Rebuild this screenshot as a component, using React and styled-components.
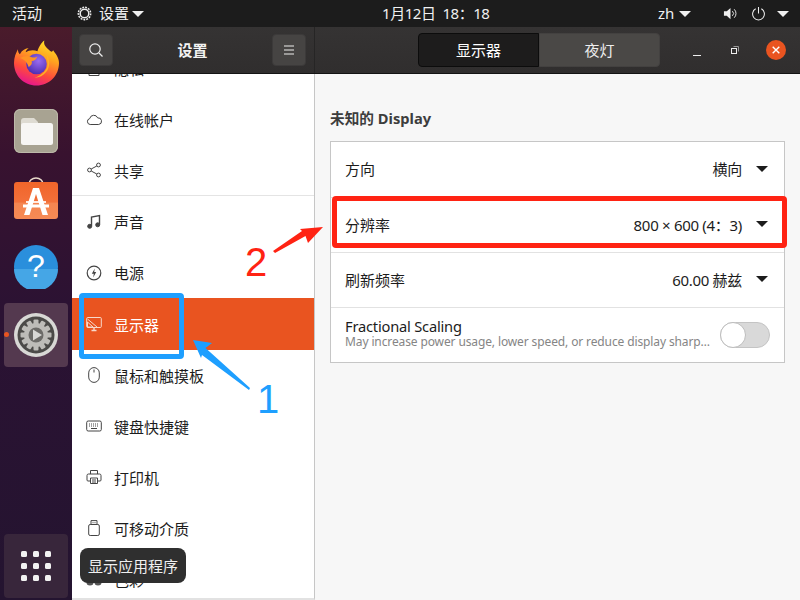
import React from "react";
import styled, { createGlobalStyle } from "styled-components";

const Global = createGlobalStyle`
  html, body { margin: 0; padding: 0; width: 800px; height: 600px; overflow: hidden; background: #1d1d1d; }
  * { box-sizing: border-box; }
  body { font-family: "Noto Sans", "Noto Sans CJK SC", sans-serif; font-size: 15px; }
`;

const Screen = styled.div`position: relative; width: 800px; height: 600px; display: flex; flex-direction: column; overflow: hidden;`;
const TopBar = styled.header`height: 27px; background: #1c1c1c; color: #f0f0f0; display: flex; align-items: center; flex: none; line-height: 27px;`;
const Activities = styled.span`margin-left: 12px; width: 65px;`;
const AppMenu = styled.span`display: flex; align-items: center; gap: 7px; width: 55px;`;
const Clock = styled.span`margin-left: 238px; width: 276px; white-space: pre; letter-spacing: -.45px;`;
const Tray = styled.span`display: flex; align-items: center;`;
const Caret = styled.i`display: block; width: 0; height: 0; border-left: 6px solid transparent; border-right: 6px solid transparent; border-top: 6px solid ${p => p.$color || "#f0f0f0"}; margin-left: ${p => p.$ml || 0}px;`;

const Body = styled.div`flex: 1; display: flex; min-height: 0;`;
const Dock = styled.nav`width: 72px; flex: none; display: flex; flex-direction: column; align-items: center; gap: 4px; padding: 4px 4px 2px; background: linear-gradient(180deg, #4a1b2b 0%, #38122f 22%, #2b1233 50%, #241430 100%);`;
const DockItem = styled.div`position: relative; width: 64px; height: 64px; flex: none; border-radius: 4px; display: flex; align-items: center; justify-content: center; background: ${p => p.$active ? "#54394f" : "transparent"}; margin-top: ${p => p.$bottom ? "auto" : 0};`;
const AppsTile = styled(DockItem)`background: #38263b;`;
const RunDot = styled.i`position: absolute; left: 0; top: 29px; width: 5px; height: 5px; border-radius: 50%; background: #e95420;`;
const AppsGrid = styled.div`display: grid; grid-template-columns: repeat(3, 6px); grid-auto-rows: 6px; gap: 6px;`;
const AppsDot = styled.i`display: block; background: #f2f2f2; border-radius: 1.5px;`;

const Win = styled.div`flex: 1; display: flex; flex-direction: column; min-width: 0;`;
const HeaderBar = styled.div`height: 47px; flex: none; display: flex; background: linear-gradient(#353333, #302e2e); border-bottom: 1px solid #141414; color: #f3f3f3;`;
const HeaderLeft = styled.div`width: 243px; flex: none; display: flex; align-items: center; justify-content: space-between; padding: 0 8px 1px 7px; border-right: 1px solid #262525;`;
const HeaderTitle = styled.span`font-weight: 700;`;
const HeaderBtn = styled.button`width: 34px; height: 32px; border: 1px solid #3c3a3a; border-radius: 4px; background: #464443; display: flex; align-items: center; justify-content: center; padding: 0;`;
const HeaderRight = styled.div`flex: 1; display: flex; align-items: center; padding-left: 103px;`;
const Switcher = styled.div`display: flex; height: 34px; width: 242px; margin-bottom: 1px;`;
const Tab = styled.div`flex: 1; display: flex; align-items: center; justify-content: center; background: ${p => p.$on ? "#1d1c1c" : "#4a4846"}; border: 1px solid ${p => p.$on ? "#0c0c0c" : "#434140"}; border-radius: ${p => p.$on ? "4px 0 0 4px" : "0 4px 4px 0"}; color: ${p => p.$on ? "#fff" : "#eee"};`;
const WinControls = styled.div`display: flex; align-items: center; margin-left: 33px; gap: 29px; margin-bottom: 1px;`;
const CloseBtn = styled.span`width: 20px; height: 20px; border-radius: 50%; background: #e95420; display: flex; align-items: center; justify-content: center; margin-left: -3px;`;

const Content = styled.div`flex: 1; display: flex; min-height: 0;`;
const Sidebar = styled.aside`width: 243px; flex: none; background: #fff; border-right: 1px solid #c6c6c6; border-bottom: 2px solid #e2e2e2; overflow: hidden;`;
const SideList = styled.ul`list-style: none; margin: -31px 0 0; padding: 0;`;
const SideRow = styled.li`height: 51.1px; display: flex; align-items: center; padding-left: 14px; gap: 12px; color: ${p => p.$on ? "#fff" : "#1c1c1c"}; background: ${p => p.$on ? "#e95420" : "transparent"}; border-bottom: ${p => p.$sep ? "1px solid #e4e4e4" : "0"};`;
const Main = styled.main`flex: 1; background: #f7f7f7; padding: 33px 15px 0 15px;`;
const SectionTitle = styled.h2`margin: 0 0 12px; font-size: 14.67px; line-height: 22px; font-weight: 700; color: #3d3d3d;`;
const Panel = styled.section`background: #fff; border: 1px solid #c6c6c6;`;
const Row = styled.div`height: 55px; display: flex; align-items: center; justify-content: space-between; padding: 0 16px 2px 14px; color: #1c1c1c; & + & { border-top: 1px solid #e2e2e2; }`;
const Value = styled.span`display: flex; align-items: center; gap: 14px; letter-spacing: -.3px;`;
const Stack = styled.div`display: flex; flex-direction: column; min-width: 0; width: 367px; margin-top: -2px;`;
const Label = styled.span`line-height: 18px; font-size: 14.67px; letter-spacing: -.2px;`;
const Sub = styled.span`font-size: 12px; line-height: 14px; letter-spacing: -.12px; color: #858585; white-space: nowrap; overflow: hidden; text-overflow: ellipsis;`;
const Toggle = styled.span`width: 50px; height: 26px; border-radius: 13px; background: #d9d9d9; border: 1px solid #c4c4c4; display: block; margin: 2px -2px 0 0;`;
const Knob = styled.i`display: block; width: 26px; height: 26px; margin: -1px; border-radius: 50%; background: #fff; border: 1px solid #bdbdbd;`;

const Tooltip = styled.div`position: absolute; left: 80px; top: 548px; width: 106px; height: 35px; border-radius: 8px; background: #2f2f2f; color: #f0f0f0; display: flex; align-items: center; justify-content: center;`;
const BlueBox = styled.div`position: absolute; left: 79px; top: 293px; width: 105px; height: 66px; border: 5px solid #1e9fff; border-radius: 4px;`;
const RedBox = styled.div`position: absolute; left: 332px; top: 196px; width: 455px; height: 52px; border: 5px solid #ff2313; border-radius: 4px;`;
const Mark = styled.span`position: absolute; left: ${p => p.$x}px; top: ${p => p.$y}px; color: ${p => p.$c}; font: 400 40px/46px "Liberation Sans", sans-serif;`;
const ArrowLayer = styled.svg`position: absolute; left: 0; top: 0; width: 800px; height: 600px; pointer-events: none;`;

const S = ({ children, size = 16, color = "#444", sw = 1 }) => (
  <svg width={size} height={size} viewBox="0 0 16 16" fill="none" stroke={color} strokeWidth={sw} style={{ flex: "none", display: "block" }}>{children}</svg>
);

const icons = {
  bell: <path d="M3 2.5h10v12H3z" />,
  cloud: <path d="M4.2 12.5a3 3 0 0 1-.5-5.9 4.2 4.2 0 0 1 8-.7 3.3 3.3 0 0 1 1 6.6z" />,
  share: <><circle cx="3.5" cy="8" r="1.9" /><circle cx="12.5" cy="3" r="1.9" /><circle cx="12.5" cy="13" r="1.9" /><path d="M5.2 7 10.8 4M5.2 9l5.6 3" /></>,
  music: <><path d="M5.5 12V3l8-1.5V10.5" strokeWidth="1.4" /><circle cx="3.7" cy="12.3" r="2" fill="#444" /><circle cx="11.7" cy="10.8" r="2" fill="#444" /></>,
  power: <><circle cx="8" cy="8" r="6.8" strokeWidth="1.2" /><path d="M8.8 3.6 5.8 8.8h2l-.6 3.6 3-5.4h-2z" fill="#444" stroke="none" /></>,
  mouse: <><rect x="2.7" y="0.6" width="10.6" height="14.8" rx="5.3" /><path d="M8 2.5v3" /></>,
  keyboard: <><rect x=".7" y="3" width="14.6" height="10" rx="1.5" /><path d="M3 6h10M3 8h10" strokeDasharray="1 1" /><path d="M5 10.5h6" /></>,
  printer: <><path d="M4.5 5V1.5h7V5M4 12H2a1 1 0 0 1-1-1V6.5a1.5 1.5 0 0 1 1.5-1.5h11A1.5 1.5 0 0 1 15 6.5V11a1 1 0 0 1-1 1h-2" /><path d="M4.5 9h7v5.5h-7zM6 11h4M6 13h4" /></>,
  usb: <><rect x="2.7" y="4.5" width="10.6" height="11" rx="1.5" /><path d="M5 4.5V.6h6v3.9M7 2.2v1M9 2.2v1" /></>,
  color: <><circle cx="4" cy="11" r="3.6" fill="#555" stroke="none" /><circle cx="12" cy="11" r="3.6" fill="#555" stroke="none" /><circle cx="8" cy="5" r="3" /></>,
};

const items = [
  ["bell", "隐私"], ["cloud", "在线帐户"], ["share", "共享", true], ["music", "声音"], ["power", "电源"],
  ["display", "显示器"], ["mouse", "鼠标和触摸板"], ["keyboard", "键盘快捷键"], ["printer", "打印机"], ["usb", "可移动介质"], ["color", "色彩"],
];

const MonitorIcon = () => (
  <S color="#f7d9cb"><rect x=".7" y="1.5" width="14.6" height="10" rx="1" /><path d="M1.5 3 11 11M1.5 6 7 11M1.5 6v5H7" /><path d="M5.5 14.5h5M8 11.5v3" strokeWidth="1.4" /></S>
);

const Firefox = () => (
  <svg width="45" height="46" viewBox="0 0 46 46">
    <defs>
      <linearGradient id="ffa" x1="0.75" y1="0" x2="0.35" y2="1"><stop offset="0" stopColor="#ffe226" /><stop offset=".35" stopColor="#ffa41f" /><stop offset=".7" stopColor="#ff4a3c" /><stop offset="1" stopColor="#e5158f" /></linearGradient>
      <radialGradient id="ffb" cx=".6" cy=".35" r=".7"><stop offset="0" stopColor="#9a6cf0" /><stop offset="1" stopColor="#4a2bb0" /></radialGradient>
    </defs>
    <path d="M31 0c-1 4 1 6 4 9 3 3 4 3 5 1 2 3 6 7 6 13 0 13-10 23-23 23C10 46 0 36 0 23 0 17 2 13 4 9c0 3 1 4 2 5 2-4 6-6 9-6-2 1-3 3-3 4 3-2 8-3 12-1 1-4 4-9 7-11z" fill="url(#ffa)" />
    <circle cx="23" cy="24" r="10.5" fill="url(#ffb)" />
    <path d="M6 18c4-2 8-3 12-1 3 1 5 0 6-1-1 3-3 5-6 5 1 3-1 5-3 6-1-3-3-7-9-9z" fill="#ff9324" />
    <path d="M33 14c4 5 4 13 0 18-3 4-7 6-12 6 6-2 11-6 13-11 1-4 0-9-1-13z" fill="#ffb224" />
  </svg>
);
const Files = () => (
  <svg width="44" height="44" viewBox="0 0 44 44">
    <rect width="44" height="44" rx="6" fill="#a8a392" /><rect x=".5" y=".5" width="43" height="43" rx="6" fill="none" stroke="#bdb9aa" />
    <path d="M7 12a3 3 0 0 1 3-3h10l4 4v6H7z" fill="#dedbd2" />
    <rect x="7" y="14" width="32" height="22" rx="2.5" fill="#f7f6f4" />
  </svg>
);
const Store = () => (
  <svg width="44" height="44" viewBox="0 0 44 44" style={{ marginTop: -3 }}>
    <defs>
      <linearGradient id="sta" x1="0" y1="0" x2="0" y2="1"><stop offset="0" stopColor="#f0652a" /><stop offset=".55" stopColor="#f3703a" /><stop offset=".56" stopColor="#f58550" /><stop offset="1" stopColor="#f68a55" /></linearGradient>
    </defs>
    <path d="M15 8a7 6 0 0 1 14 0" fill="none" stroke="#eadbcb" strokeWidth="1.6" />
    <rect y="6" width="44" height="37" rx="3" fill="url(#sta)" />
    <path d="M19 12h6l9 27h-5.5L22 18l-6.5 21H10z" fill="#fff" />
    <path d="M9 28.5h26v3H9z" fill="#fff" /><path d="M12 25h20v2H12z" fill="#fff" opacity=".85" />
  </svg>
);
const Help = () => (
  <svg width="44" height="44" viewBox="0 0 44 44">
    <circle cx="22" cy="22" r="22" fill="#2a8fdc" />
    <path d="M0 24h44a22 22 0 0 1-44 0z" fill="#45a6e6" />
    <text x="22" y="32" textAnchor="middle" fontFamily="Liberation Sans, sans-serif" fontSize="32" fill="#fff">?</text>
  </svg>
);
const teeth = Array.from({ length: 12 }, (_, i) => i * 30);
const Gear = () => (
  <svg width="44" height="44" viewBox="0 0 44 44">
    <circle cx="22" cy="22" r="22" fill="#d8d8d5" />
    <circle cx="22" cy="22" r="18.5" fill="#4b4a48" />
    {teeth.map(a => <rect key={a} x="19.5" y="6.5" width="5" height="5" rx="1" fill="#bdbcb8" transform={`rotate(${a} 22 22)`} />)}
    <circle cx="22" cy="22" r="12" fill="#bdbcb8" />
    <circle cx="22" cy="22" r="7.5" fill="#6c6b68" />
    <path d="M19 16.5v11l9-5.5z" fill="#d8d8d5" />
  </svg>
);

export default function App() {
  return (
    <Screen>
      <Global />
      <TopBar>
        <Activities>活动</Activities>
        <AppMenu>
          <svg width="15" height="15" viewBox="0 0 16 16" fill="none" stroke="#eee"><circle cx="8" cy="8" r="4.6" strokeWidth="1.6" /><circle cx="8" cy="8" r="6.6" strokeWidth="1.6" strokeDasharray="2 1.1" /></svg>
          <span>设置</span>
        </AppMenu>
        <Caret />
        <Clock>1月12日  18：18</Clock>
        <Tray>
          zh<Caret $ml={5} />
          <svg width="15" height="15" viewBox="0 0 16 16" style={{ marginLeft: 32 }} fill="none" stroke="#eee"><path d="M1 5.5h3L8 2v12l-4-3.5H1z" fill="#eee" stroke="none" /><path d="M10 5.5a3.4 3.4 0 0 1 0 5M12 3.5a6.4 6.4 0 0 1 0 9" /></svg>
          <svg width="15" height="15" viewBox="0 0 16 16" style={{ marginLeft: 13 }} fill="none" stroke="#eee" strokeWidth="1.1"><path d="M5 3a6.3 6.3 0 1 0 6 0M8 1v7" /></svg>
          <Caret $ml={11} />
        </Tray>
      </TopBar>
      <Body>
        <Dock>
          <DockItem><Firefox /></DockItem>
          <DockItem><Files /></DockItem>
          <DockItem><Store /></DockItem>
          <DockItem><Help /></DockItem>
          <DockItem $active><RunDot /><Gear /></DockItem>
          <AppsTile $bottom>
            <AppsGrid>{Array.from({ length: 9 }, (_, i) => <AppsDot key={i} />)}</AppsGrid>
          </AppsTile>
        </Dock>
        <Win>
          <HeaderBar>
            <HeaderLeft>
              <HeaderBtn>
                <svg width="16" height="16" viewBox="0 0 16 16" fill="none" stroke="#eee" strokeWidth="1.2"><circle cx="7" cy="7" r="5.2" /><path d="m11 11 3.5 3.5" /></svg>
              </HeaderBtn>
              <HeaderTitle>设置</HeaderTitle>
              <HeaderBtn>
                <svg width="12" height="12" viewBox="0 0 12 12" stroke="#eee"><path d="M1 2h10M1 6h10M1 10h10" /></svg>
              </HeaderBtn>
            </HeaderLeft>
            <HeaderRight>
              <Switcher>
                <Tab $on>显示器</Tab>
                <Tab>夜灯</Tab>
              </Switcher>
              <WinControls>
                <svg width="8" height="8" viewBox="0 0 8 8" stroke="#eee" style={{ marginTop: 5 }}><path d="M0 7.5h8" /></svg>
                <svg width="10" height="10" viewBox="0 0 10 10" fill="none" stroke="#eee"><rect x="1.5" y="3.5" width="5" height="5" /><path d="M3.5 1.5h5v5" stroke="#999" /></svg>
                <CloseBtn>
                  <svg width="8" height="8" viewBox="0 0 8 8" stroke="#fff" strokeWidth="1.4"><path d="m.7.7 6.6 6.6M7.3.7.7 7.3" /></svg>
                </CloseBtn>
              </WinControls>
            </HeaderRight>
          </HeaderBar>
          <Content>
            <Sidebar>
              <SideList>
                {items.map(([k, t, sep]) => (
                  <SideRow key={t} $on={k === "display"} $sep={sep}>
                    {k === "display" ? <MonitorIcon /> : <S>{icons[k]}</S>}
                    <span>{t}</span>
                  </SideRow>
                ))}
              </SideList>
            </Sidebar>
            <Main>
              <SectionTitle>未知的 Display</SectionTitle>
              <Panel>
                <Row><span>方向</span><Value>横向<Caret $color="#1c1c1c" /></Value></Row>
                <Row><span>分辨率</span><Value>800 × 600 (4：3)<Caret $color="#1c1c1c" /></Value></Row>
                <Row><span>刷新频率</span><Value>60.00 赫兹<Caret $color="#1c1c1c" /></Value></Row>
                <Row>
                  <Stack>
                    <Label>Fractional Scaling</Label>
                    <Sub>May increase power usage, lower speed, or reduce display sharpness.</Sub>
                  </Stack>
                  <Toggle><Knob /></Toggle>
                </Row>
              </Panel>
            </Main>
          </Content>
        </Win>
      </Body>
      <Tooltip>显示应用程序</Tooltip>
      <BlueBox />
      <RedBox />
      <ArrowLayer viewBox="0 0 800 600">
        <path d="M193 340 212 343 205.5 348 250 388 249 390 202 355 201 358z" fill="#1e9fff" />
        <path d="M323 227 308 243 305.5 236 275 253 273 251 302 231 300 229z" fill="#ff2313" />
      </ArrowLayer>
      <Mark $x={257} $y={376} $c="#1e9fff">1</Mark>
      <Mark $x={245} $y={239} $c="#ff2313">2</Mark>
    </Screen>
  );
}
